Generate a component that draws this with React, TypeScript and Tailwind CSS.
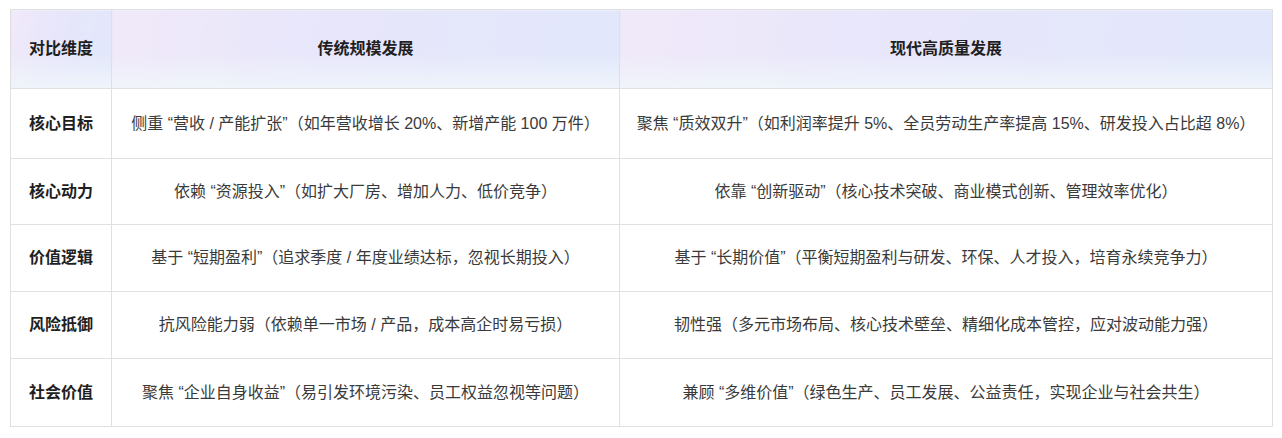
// Comparison table: traditional scale vs high-quality development

const rows = [
  {
    dim: '核心目标',
    old: '侧重 “营收 / 产能扩张”（如年营收增长 20%、新增产能 100 万件）',
    now: '聚焦 “质效双升”（如利润率提升 5%、全员劳动生产率提高 15%、研发投入占比超 8%）',
    h: 'h-[70px]',
  },
  {
    dim: '核心动力',
    old: '依赖 “资源投入”（如扩大厂房、增加人力、低价竞争）',
    now: '依靠 “创新驱动”（核心技术突破、商业模式创新、管理效率优化）',
    h: 'h-[66px]',
  },
  {
    dim: '价值逻辑',
    old: '基于 “短期盈利”（追求季度 / 年度业绩达标，忽视长期投入）',
    now: '基于 “长期价值”（平衡短期盈利与研发、环保、人才投入，培育永续竞争力）',
    h: 'h-[67px]',
  },
  {
    dim: '风险抵御',
    old: '抗风险能力弱（依赖单一市场 / 产品，成本高企时易亏损）',
    now: '韧性强（多元市场布局、核心技术壁垒、精细化成本管控，应对波动能力强）',
    h: 'h-[67px]',
  },
  {
    dim: '社会价值',
    old: '聚焦 “企业自身收益”（易引发环境污染、员工权益忽视等问题）',
    now: '兼顾 “多维价值”（绿色生产、员工发展、公益责任，实现企业与社会共生）',
    h: 'h-[68px]',
  },
];

const headBg =
  'bg-[linear-gradient(to_bottom,rgba(255,255,255,0)_55%,rgba(240,246,250,0.9)_100%),linear-gradient(100deg,#f0e9f9_0%,#e7e6fb_45%,#e2e7fb_100%)]';

export default function App() {
  return (
    <div className="bg-white w-[1282px] h-[438px] pt-[9px] pl-[10px] [text-spacing-trim:space-all] font-['Liberation_Sans','Noto_Sans_CJK_SC',sans-serif]">
      <table className="border-collapse table-fixed w-[1262px] text-center">
        <colgroup>
          <col className="w-[101px]" />
          <col className="w-[508px]" />
          <col className="w-[653px]" />
        </colgroup>
        <thead>
          {/* Header */}
          <tr className="h-[79px]">
            {['对比维度', '传统规模发展', '现代高质量发展'].map((t) => (
              <th
                key={t}
                className={`border border-[#e0e0e0] text-[16px] font-bold text-[#1f1f1f] ${headBg}`}
              >
                {t}
              </th>
            ))}
          </tr>
        </thead>
        <tbody>
          {rows.map((r) => (
            <tr key={r.dim} className={r.h}>
              <td className="border border-[#e0e0e0] text-[16px] font-bold text-[#1f1f1f]">
                {r.dim}
              </td>
              <td className="border border-[#e0e0e0] text-[16px] text-[#3a3a3a]">
                {r.old}
              </td>
              <td className="border border-[#e0e0e0] text-[16px] text-[#3a3a3a]">
                {r.now}
              </td>
            </tr>
          ))}
        </tbody>
      </table>
    </div>
  );
}
